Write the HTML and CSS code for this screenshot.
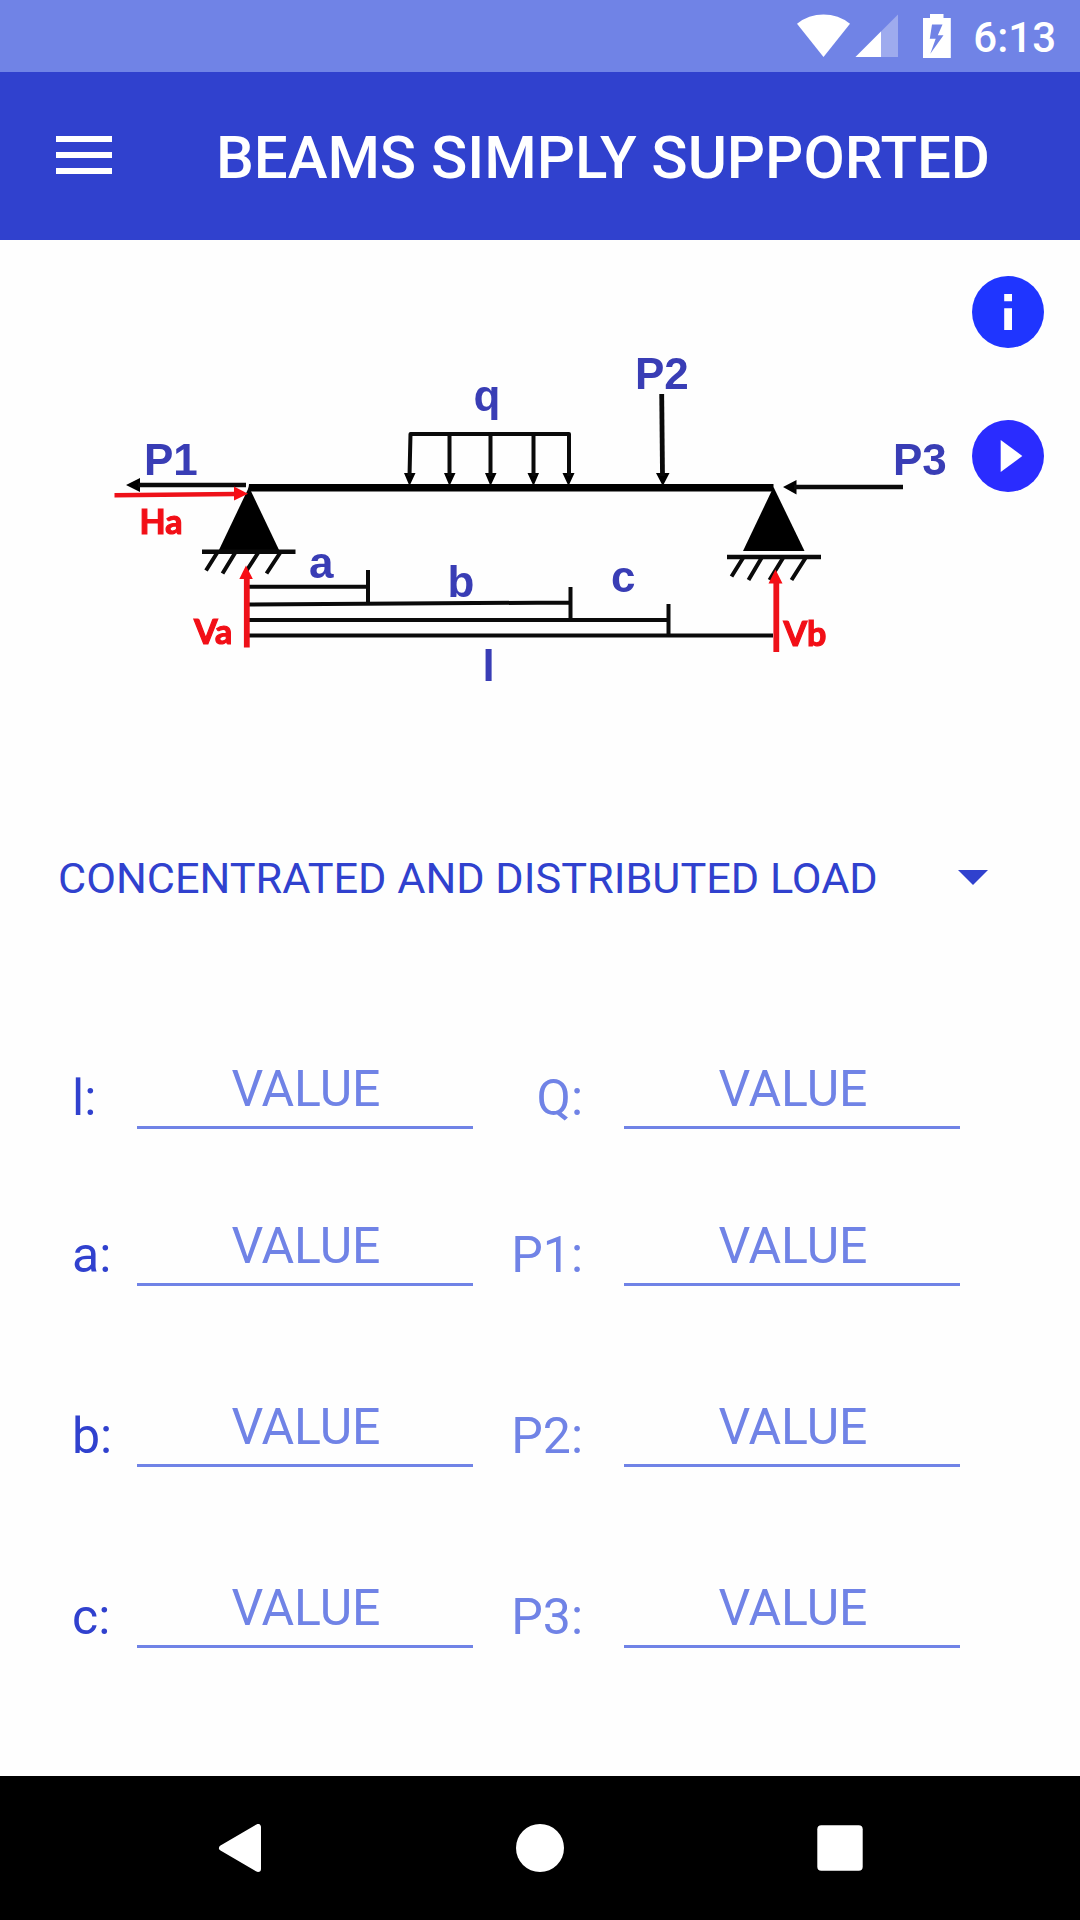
FILE: index.html
```html
<!DOCTYPE html>
<html lang="en">
<head>
<meta charset="utf-8">
<title>Beams simply supported</title>
<link rel="stylesheet" href="styles.css">
</head>
<body>
<div class="status-bar">
  <svg class="status-icons" viewBox="0 0 160 44" aria-hidden="true">
    <path fill="#fff" d="M0 9.800A42 42 0 0 1 53 9.800L26.500 43Z"/>
    <path fill="#fff" opacity=".32" d="M58.500 43L101 .6V43Z"/>
    <path fill="#fff" d="M58.500 43L84 17.500V43Z"/>
    <path fill="#fff" fill-rule="evenodd" d="M126 4H133V0H146.500V4H153.800V44H126ZM135 10.600L132.800 24.800H138.700L133.300 39.800L146.500 21.200H140.800L145.500 10.600Z"/>
  </svg>
  <span class="clock">6:13</span>
</div>

<header class="app-bar">
  <button class="menu" aria-label="Menu"><i></i><i></i><i></i></button>
  <h1 class="title">BEAMS SIMPLY SUPPORTED</h1>
</header>

<main class="content">
  <section class="figure">
    <svg class="beam" viewBox="0 240 1080 560" role="img" aria-label="Loaded beam">
      <!-- beam, supports and loads -->
      <g fill="#000" stroke="none">
        <path d="M249 484H773.500V491.500H248Z"/>
        <path d="M249 487L280 552H218Z"/>
        <path d="M773.500 487L804.500 551H743Z"/>
        <path d="M126 485L140 478V492ZM783 487L796.500 480V494.500Z"/>
        <path d="M404 473H415.500L409.500 486ZM444 473H455.500L449.500 486ZM485 473H496.500L490.500 486ZM527.500 473H539L533.500 486ZM562.500 473H574.500L568.500 486ZM656 473H669.500L662.800 486Z"/>
      </g>
      <g class="strokes">
        <path stroke-width="4.400" d="M138 485H246M794 487H903M202 551.700H295.500"/>
        <path stroke-width="4.400" d="M727 557H821"/>
        <path stroke-width="4" d="M217 553L206 570.500M235 553L222.500 573.500M258 553L245 573M280 553L266.500 573.500M743 558L731.500 576.500M761.500 558L748.500 580M783 558L769.500 580M805.500 558L791.500 580"/>
        <path stroke-width="4" stroke-linejoin="round" d="M409.500 476L410.500 434H569V476M449.500 434V476M490.500 434V476M533.500 434V476"/>
        <path stroke-width="4.800" d="M661.700 394L662.500 476"/>
        <path stroke-width="4" d="M249 586.700H368M368 570V603M249 604.500L570 602.500M570.500 587V619M249 620H668M668.500 604V635M249 635.500H773"/>
      </g>
      <!-- support reactions -->
      <g class="reactions">
        <path d="M234 486.500V500.500L248 493.700Z"/>
        <path d="M239.300 579L246 565.500L252.800 579Z"/>
        <path d="M768.500 583.500L775.500 569.500L782.500 583.500Z"/>
        <path fill="none" stroke-width="4.400" d="M114.500 495.200L236 494"/>
        <path fill="none" stroke-width="5.800" d="M246.800 577V647.500M776.300 581V652"/>
      </g>
      <g class="force">
        <text x="144" y="475">P1</text>
        <text x="635" y="388.500">P2</text>
        <text x="893" y="475">P3</text>
        <text x="473.500" y="411">q</text>
        <text x="309" y="578">a</text>
        <text x="447.500" y="597">b</text>
        <text x="611" y="591.500">c</text>
        <text x="482.500" y="681">l</text>
      </g>
      <g class="reaction-label">
        <text x="139.500" y="533.500">Ha</text>
        <text x="194" y="644">Va</text>
        <text x="783.500" y="645.500">Vb</text>
      </g>
    </svg>
    <div class="actions">
      <button class="round info" aria-label="Information">
        <svg viewBox="0 0 72 72"><path fill="#fff" d="M32.200 18H40V25.300H32.200ZM32.200 32.300H40V54H32.200Z"/></svg>
      </button>
      <button class="round play" aria-label="Calculate">
        <svg viewBox="0 0 72 72"><path fill="#fff" d="M28.700 20L50.300 36L28.700 52Z"/></svg>
      </button>
    </div>
  </section>

  <div class="spinner">
    <span>CONCENTRATED AND DISTRIBUTED LOAD</span>
    <svg class="caret" viewBox="0 0 30 15"><path d="M0 0H30L15 15Z"/></svg>
  </div>

  <form class="fields">
    <div class="row"><label>l:</label><div class="field">VALUE</div><label class="load">Q:</label><div class="field">VALUE</div></div>
    <div class="row"><label>a:</label><div class="field">VALUE</div><label class="load">P1:</label><div class="field">VALUE</div></div>
    <div class="row"><label>b:</label><div class="field">VALUE</div><label class="load">P2:</label><div class="field">VALUE</div></div>
    <div class="row"><label>c:</label><div class="field">VALUE</div><label class="load">P3:</label><div class="field">VALUE</div></div>
  </form>
</main>

<nav class="nav-bar">
  <svg viewBox="0 0 48 48" aria-label="Back"><path fill="#fff" stroke="#fff" stroke-width="6" stroke-linejoin="round" d="M6 24L42 3V45Z"/></svg>
  <svg viewBox="0 0 48 48" aria-label="Home"><circle cx="24" cy="24" r="24" fill="#fff"/></svg>
  <svg viewBox="0 0 48 48" aria-label="Recent"><rect x="1.300" y="1.300" width="45.400" height="45.400" rx="4" fill="#fff"/></svg>
</nav>
</body>
</html>
```

FILE: styles.css
```css
* { box-sizing: border-box; }

body {
  margin: 0;
  width: 1080px;
  height: 1920px;
  display: flex;
  flex-direction: column;
  background: #fefefe;
  color: #3041ce;
  font-family: Roboto, "Liberation Sans", sans-serif;
}

button { border: 0; padding: 0; background: none; }
svg { display: block; }

.status-bar {
  height: 72px;
  padding: 0 24px 0 797px;
  display: flex;
  justify-content: space-between;
  background: #7083e6;
  color: #fff;
}
.status-icons { width: 160px; height: 44px; margin-top: 14px; }
.clock { font-size: 42px; font-weight: 500; line-height: 76px; }

.app-bar {
  height: 168px;
  padding-left: 56px;
  display: flex;
  background: #3041ce;
  color: #fff;
}
.menu {
  width: 56px;
  height: 38px;
  margin: 64px 104px 0 0;
  display: flex;
  flex-direction: column;
  justify-content: space-between;
}
.menu i { display: block; width: 56px; height: 6px; background: #fff; }
.title { margin: 0; font-size: 60px; font-weight: 500; line-height: 172px; letter-spacing: -.04px; white-space: nowrap; }

.content { flex: 1; display: flex; flex-direction: column; }

.figure { display: grid; height: 560px; }
.beam, .actions { grid-area: 1 / 1; }
.beam { width: 1080px; height: 560px; filter: blur(.7px); }
.strokes { fill: none; stroke: #0a0a0a; }
.reactions { fill: #f80d14; stroke: none; }
.reactions path[fill="none"] { stroke: #ee1119; }
.force { font: bold 44px "Liberation Sans", Arial, sans-serif; fill: #393db5; }
.reaction-label { font: bold 34px Lato, sans-serif; fill: #f20f17; stroke: #f20f17; stroke-width: 1.2px; }

.actions {
  position: relative;
  justify-self: end;
  display: flex;
  flex-direction: column;
  gap: 72px;
  padding: 36px 36px 0 0;
}
.round { width: 72px; height: 72px; border-radius: 50%; }
.info { background: #1f35ff; }
.play { background: #2a2cff; }

.spinner {
  height: 156px;
  padding: 0 92px 0 58px;
  display: flex;
  align-items: center;
  justify-content: space-between;
  font-size: 43.250px;
}
.caret { width: 30px; height: 15px; margin-bottom: 1px; fill: #3041ce; }

.fields { padding: 77px 120px 0 72px; display: grid; grid-template-rows: 157px 181px 181px 181px; }
.row {
  display: grid;
  grid-template-columns: 65px 336px 110px 41px 336px;
  align-items: start;
  font-size: 50px;
}
.row label { line-height: 60px; padding-top: 35px; }
.row .load { color: #7083e6; text-align: right; }
.row .load + .field { grid-column: 5; }
.field {
  height: 96px;
  border-bottom: 3px solid #7083e6;
  padding: 26px 0 0 2px;
  line-height: 60px;
  text-align: center;
  color: #7083e6;
}

.nav-bar {
  height: 144px;
  padding: 0 216px;
  display: flex;
  align-items: center;
  justify-content: space-between;
  background: #000;
}
.nav-bar svg { width: 48px; height: 48px; }
```
